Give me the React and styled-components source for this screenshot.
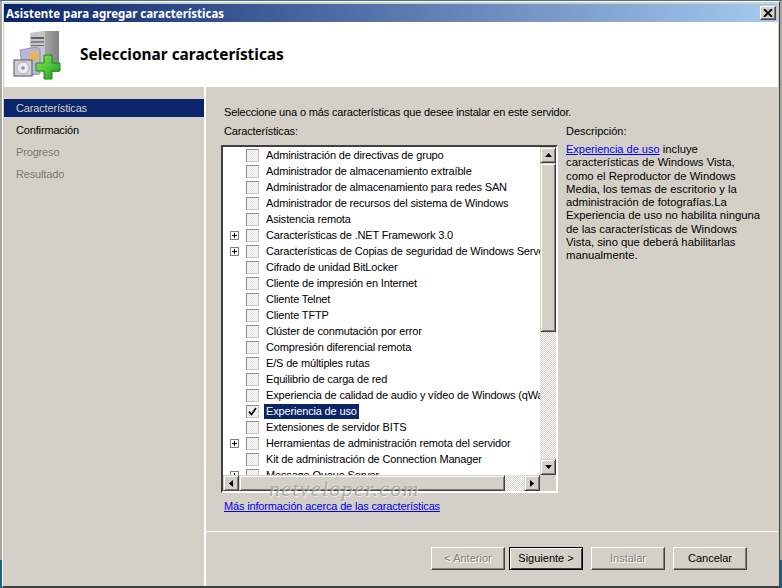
import React from "react";
import styled, { createGlobalStyle } from "styled-components";

const FACE = "#d4d0c8";
const NAVY = "#0a246a";
const UI_FONT = `"Liberation Sans", Arial, sans-serif`;
const TITLE_FONT = `"Noto Sans", "DejaVu Sans", sans-serif`;
const TIGHT = "-0.16px";

const features = [
  { name: "Administración de directivas de grupo" },
  { name: "Administrador de almacenamiento extraíble" },
  { name: "Administrador de almacenamiento para redes SAN" },
  { name: "Administrador de recursos del sistema de Windows" },
  { name: "Asistencia remota" },
  { name: "Características de .NET Framework 3.0", tree: true },
  { name: "Características de Copias de seguridad de Windows Server", tree: true },
  { name: "Cifrado de unidad BitLocker" },
  { name: "Cliente de impresión en Internet" },
  { name: "Cliente Telnet" },
  { name: "Cliente TFTP" },
  { name: "Clúster de conmutación por error" },
  { name: "Compresión diferencial remota" },
  { name: "E/S de múltiples rutas" },
  { name: "Equilibrio de carga de red" },
  { name: "Experiencia de calidad de audio y vídeo de Windows (qWave)" },
  { name: "Experiencia de uso", checked: true },
  { name: "Extensiones de servidor BITS" },
  { name: "Herramientas de administración remota del servidor", tree: true },
  { name: "Kit de administración de Connection Manager" },
  { name: "Message Queue Server", tree: true },
];

const GlobalStyle = createGlobalStyle`
  html, body {
    margin: 0;
    padding: 0;
    width: 782px;
    height: 588px;
    overflow: hidden;
    background: linear-gradient(180deg, #3a7a90 0, #3a7a90 1px, #a8a8a2 1px, #a8a8a2 560px, #1d5f85 560px);
    font-family: ${UI_FONT};
  }
`;

const Window = styled.div`
  box-sizing: border-box;
  width: 778px;
  height: 587px;
  margin: 1px 0 0 2px;
  padding: 2px 1px 0 1px;
  background: ${FACE};
  border-top: 1px solid #ffffff;
  border-left: 1px solid #ffffff;
  border-right: 1px solid #404040;
  border-bottom: 2px solid #404040;
  display: flex;
  flex-direction: column;
  position: relative;
`;

const TitleBar = styled.div`
  height: 18px;
  flex: none;
  margin-right: 1px;
  background: linear-gradient(90deg, ${NAVY} 0%, #a6caf0 100%);
  display: flex;
  align-items: center;
  justify-content: space-between;
  padding: 0 1px 0 2px;
`;

const TitleText = styled.span`
  color: #fff;
  font-family: ${TITLE_FONT};
  font-size: 11.5px;
  font-weight: 700;
`;

const CloseButton = styled.div`
  box-sizing: border-box;
  width: 16px;
  height: 14px;
  background: ${FACE};
  border: 1px solid;
  border-color: #fff #404040 #404040 #fff;
  box-shadow: inset -1px -1px #808080;
  display: flex;
  align-items: center;
  justify-content: center;
`;

const Banner = styled.div`
  height: 65px;
  flex: none;
  background: #fff;
  display: flex;
  align-items: center;
  gap: 17px;
  padding-left: 9px;
`;

const BannerTitle = styled.h1`
  margin: 0;
  color: #000;
  font-family: ${TITLE_FONT};
  font-size: 15.4px;
  font-weight: 700;
`;

const Body = styled.div`
  flex: 1;
  display: flex;
  min-height: 0;
`;

const Nav = styled.nav`
  width: 200px;
  flex: none;
  padding-top: 12px;
  display: flex;
  flex-direction: column;
  gap: 4px;
`;

const NavItem = styled.div`
  height: 18px;
  line-height: 18px;
  padding-left: 12px;
  font-size: 11px;
  letter-spacing: ${TIGHT};
  color: ${(p) => (p.$state === "active" ? "#d4d0c8" : p.$state === "next" ? "#000" : "#7a7a74")};
  background: ${(p) => (p.$state === "active" ? NAVY : "transparent")};
`;

const Content = styled.main`
  flex: 1;
  min-width: 0;
  border-left: 2px solid #fff;
  display: flex;
  flex-direction: column;
`;

const Columns = styled.div`
  flex: 1;
  min-height: 0;
  display: flex;
  gap: 7px;
  padding: 17px 0 0 18px;
`;

const LeftColumn = styled.div`
  width: 335px;
  flex: none;
  display: flex;
  flex-direction: column;
`;

const Label = styled.div`
  font-size: 11px;
  line-height: 16px;
  color: #000;
  white-space: nowrap;
`;

const Intro = styled(Label)`
  margin-bottom: 3px;
  letter-spacing: ${TIGHT};
`;

const ListLabel = styled(Label)`
  margin-bottom: 6px;
  letter-spacing: ${TIGHT};
`;

const ListFrame = styled.div`
  box-sizing: border-box;
  width: 337px;
  height: 348px;
  flex: none;
  margin-left: -3px;
  display: grid;
  grid-template-columns: 317px 16px;
  grid-template-rows: 328px 16px;
  border: 2px solid;
  border-color: #404040 #fff #fff #404040;
  background: ${FACE};
`;

const ListRows = styled.div`
  background: #fff;
  overflow: hidden;
  min-width: 0;
`;

const Row = styled.div`
  height: 16px;
  display: flex;
  align-items: center;
  white-space: nowrap;
`;

const TreeSlot = styled.div`
  width: 23px;
  flex: none;
  display: flex;
  justify-content: flex-end;
  padding-right: 7px;
  box-sizing: border-box;
`;

const Expander = styled.div`
  box-sizing: border-box;
  width: 9px;
  height: 9px;
  border: 1px solid #808080;
  position: relative;
  &::before {
    content: "";
    position: absolute;
    left: 1px;
    top: 3px;
    width: 5px;
    height: 1px;
    background: #000;
  }
  &::after {
    content: "";
    position: absolute;
    left: 3px;
    top: 1px;
    width: 1px;
    height: 5px;
    background: #000;
  }
`;

const Check = styled.div`
  box-sizing: border-box;
  width: 13px;
  height: 13px;
  flex: none;
  border: 1px solid #8f8f8a;
  border-right-color: #c8c5bd;
  border-bottom-color: #c8c5bd;
  background: repeating-conic-gradient(#e4e2dd 0 25%, #fff 0 50%) 0 0 / 2px 2px;
  display: flex;
  align-items: center;
  justify-content: center;
`;

const RowText = styled.span`
  margin-left: 5px;
  padding: 0 2px;
  height: 15px;
  line-height: 15px;
  font-size: 11px;
  letter-spacing: ${TIGHT};
  color: ${(p) => (p.$selected ? "#fff" : "#000")};
  background: ${(p) => (p.$selected ? NAVY : "transparent")};
`;

const VScroll = styled.div`
  display: flex;
  flex-direction: column;
`;

const HScroll = styled.div`
  display: flex;
`;

const Arrow = styled.div`
  box-sizing: border-box;
  width: 16px;
  height: 16px;
  flex: none;
  background: ${FACE};
  border: 1px solid;
  border-color: ${FACE} #404040 #404040 ${FACE};
  box-shadow: inset 1px 1px #fff, inset -1px -1px #808080;
  display: flex;
  align-items: center;
  justify-content: center;
`;

const Thumb = styled.div`
  box-sizing: border-box;
  flex: none;
  background: ${FACE};
  border: 1px solid;
  border-color: ${FACE} #404040 #404040 ${FACE};
  box-shadow: inset 1px 1px #fff, inset -1px -1px #808080;
  ${(p) => (p.$vertical ? "height: 169px;" : "width: 266px;")}
`;

const Track = styled.div`
  flex: 1;
  background: repeating-conic-gradient(#d4d0c8 0 25%, #fff 0 50%) 0 0 / 2px 2px;
`;

const Corner = styled.div`
  background: ${FACE};
`;

const Watermark = styled.div`
  position: absolute;
  left: 266px;
  top: 474px;
  font-family: "Liberation Serif", serif;
  font-style: italic;
  font-size: 22px;
  letter-spacing: 1.3px;
  color: rgba(150, 150, 145, 0.7);
  text-shadow: 1px 1px 0 rgba(255, 255, 255, 0.5);
  pointer-events: none;
`;

const InfoLink = styled.a`
  margin-top: 5px;
  font-size: 11px;
  line-height: 16px;
  letter-spacing: ${TIGHT};
  color: #0000ee;
  text-decoration: underline;
  white-space: nowrap;
`;

const Description = styled.aside`
  flex: 1;
  min-width: 0;
  padding-top: 19px;
`;

const DescriptionBody = styled.p`
  margin: 4px 0 0;
  font-size: 11.3px;
  line-height: 13.25px;
  color: #000;
  white-space: nowrap;
`;

const DescLink = styled.a`
  font-size: 11px;
  color: #0000ee;
  text-decoration: underline;
`;

const Footer = styled.div`
  height: 55px;
  flex: none;
  box-sizing: border-box;
  border-top: 1px solid #fff;
  display: flex;
  justify-content: flex-end;
  padding: 15px 31px 0 0;
`;

const Button = styled.div`
  box-sizing: border-box;
  width: 74px;
  height: 23px;
  line-height: 20px;
  margin-left: ${(p) => p.$gap}px;
  text-align: center;
  font-size: 11px;
  color: ${(p) => (p.$disabled ? "#808080" : "#000")};
  text-shadow: ${(p) => (p.$disabled ? "1px 1px 0 #fff" : "none")};
  background: ${FACE};
  border: 1px solid;
  border-color: ${(p) => (p.$primary ? "#000" : "#fff #404040 #404040 #fff")};
  box-shadow: ${(p) => (p.$primary ? "inset 1px 1px #fff, inset -1px -1px #404040" : "inset -1px -1px #808080")};
`;

const Triangle = ({ dir }) => {
  const points = {
    up: "0,4 7,4 3.5,0",
    down: "0,0 7,0 3.5,4",
    left: "4,0 4,7 0,3.5",
    right: "0,0 0,7 4,3.5",
  };
  const wide = dir === "up" || dir === "down";
  return (
    <svg width={wide ? 7 : 4} height={wide ? 4 : 7} viewBox={wide ? "0 0 7 4" : "0 0 4 7"}>
      <polygon points={points[dir]} fill="#000" />
    </svg>
  );
};

const WizardIcon = () => (
  <svg width="50" height="50" viewBox="0 0 50 50">
    <defs>
      <linearGradient id="tower" x1="0" x2="1" y1="0" y2="0">
        <stop offset="0" stopColor="#c9ccc9" />
        <stop offset="1" stopColor="#7f8281" />
      </linearGradient>
      <linearGradient id="plus" x1="0" x2="1" y1="0" y2="1">
        <stop offset="0" stopColor="#8ee85a" />
        <stop offset="1" stopColor="#1c9e1c" />
      </linearGradient>
    </defs>
    <polygon points="17,3 32,1 46,1 46,42 32,42 17,40" fill="url(#tower)" />
    <polygon points="17,3 32,1 32,42 17,40" fill="#c3c6c8" />
    <rect x="18" y="7" width="13" height="2" fill="#5d6062" />
    <rect x="18" y="11" width="13" height="2" fill="#85888a" />
    <rect x="18" y="15" width="13" height="1" fill="#6d7072" />
    <polygon points="7,20 24,17 27,20 27,44 10,46" fill="#b9b6dc" stroke="#7b78a8" strokeWidth="0.7" />
    <circle cx="21" cy="26" r="5" fill="#e6b65a" />
    <rect x="1" y="30" width="18" height="16" fill="#cfd0d4" stroke="#55565c" />
    <circle cx="10" cy="38" r="6" fill="#e9ebf0" stroke="#9a9ca5" strokeWidth="0.7" />
    <circle cx="10" cy="38" r="1.8" fill="#8f9198" />
    <path
      d="M31 25 h8 v8 h8 v8 h-8 v8 h-8 v-8 h-8 v-8 h8 z"
      fill="url(#plus)"
      stroke="#188a18"
      strokeWidth="1"
    />
  </svg>
);

const App = () => {
  return (
    <>
      <GlobalStyle />
      <Window>
        <TitleBar>
          <TitleText>Asistente para agregar características</TitleText>
          <CloseButton>
            <svg width="10" height="8" viewBox="0 0 10 8">
              <path d="M1 0 L9 8 M9 0 L1 8" stroke="#000" strokeWidth="1.8" />
            </svg>
          </CloseButton>
        </TitleBar>
        <Banner>
          <WizardIcon />
          <BannerTitle>Seleccionar características</BannerTitle>
        </Banner>
        <Body>
          <Nav>
            <NavItem $state="active">Características</NavItem>
            <NavItem $state="next">Confirmación</NavItem>
            <NavItem>Progreso</NavItem>
            <NavItem>Resultado</NavItem>
          </Nav>
          <Content>
            <Columns>
              <LeftColumn>
                <Intro>Seleccione una o más características que desee instalar en este servidor.</Intro>
                <ListLabel>Características:</ListLabel>
                <ListFrame>
                  <ListRows>
                    {features.map((f) => (
                      <Row key={f.name}>
                        <TreeSlot>{f.tree && <Expander />}</TreeSlot>
                        <Check>
                          {f.checked && (
                            <svg width="9" height="9" viewBox="0 0 9 9">
                              <path d="M1 4.5 L3.5 7.5 L8 1" fill="none" stroke="#000" strokeWidth="1.6" />
                            </svg>
                          )}
                        </Check>
                        <RowText $selected={f.checked}>{f.name}</RowText>
                      </Row>
                    ))}
                  </ListRows>
                  <VScroll>
                    <Arrow><Triangle dir="up" /></Arrow>
                    <Thumb $vertical />
                    <Track />
                    <Arrow><Triangle dir="down" /></Arrow>
                  </VScroll>
                  <HScroll>
                    <Arrow><Triangle dir="left" /></Arrow>
                    <Thumb />
                    <Track />
                    <Arrow><Triangle dir="right" /></Arrow>
                  </HScroll>
                  <Corner />
                </ListFrame>
                <InfoLink href="#">Más información acerca de las características</InfoLink>
              </LeftColumn>
              <Description>
                <Label>Descripción:</Label>
                <DescriptionBody>
                  <DescLink href="#">Experiencia de uso</DescLink> incluye
                  <br />características de Windows Vista,
                  <br />como el Reproductor de Windows
                  <br />Media, los temas de escritorio y la
                  <br />administración de fotografías.La
                  <br />Experiencia de uso no habilita ninguna
                  <br />de las características de Windows
                  <br />Vista, sino que deberá habilitarlas
                  <br />manualmente.
                </DescriptionBody>
              </Description>
            </Columns>
            <Footer>
              <Button $disabled $gap={0}>&lt; Anterior</Button>
              <Button $primary $gap={4}>Siguiente &gt;</Button>
              <Button $disabled $gap={8}>Instalar</Button>
              <Button $gap={8}>Cancelar</Button>
            </Footer>
          </Content>
        </Body>
        <Watermark>netveloper.com</Watermark>
      </Window>
    </>
  );
};

export default App;
